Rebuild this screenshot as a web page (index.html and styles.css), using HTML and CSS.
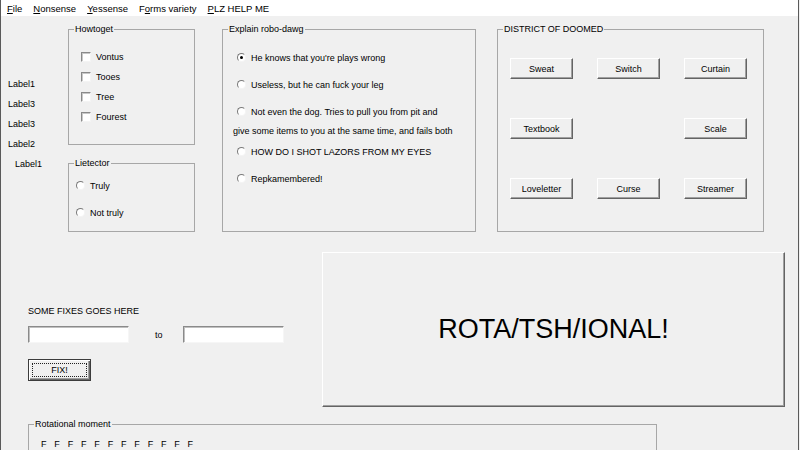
FILE: index.html
```html
<!DOCTYPE html>
<html lang="en">
<head>
	<meta charset="UTF-8">
	<title>Form1</title>

	<link rel="stylesheet" href="styles.css">
</head>
<body>
<div class="window">
	<nav class="menubar">
		<span><u>F</u>ile</span>
		<span><u>N</u>onsense</span>
		<span><u>Y</u>essense</span>
		<span>F<u>o</u>rms variety</span>
		<span><u>P</u>LZ HELP ME</span>
	</nav>

	<div class="form">
		<div class="top-row">
			<div class="labels">
				<span>Label1</span>
				<span>Label3</span>
				<span>Label3</span>
				<span>Label2</span>
				<span class="shifted">Label1</span>
			</div>

			<div class="stack">
				<div class="group howtoget">
					<span class="group-title">Howtoget</span>
					<label class="check-row"><span class="checkbox"></span>Vontus</label>
					<label class="check-row"><span class="checkbox"></span>Tooes</label>
					<label class="check-row"><span class="checkbox"></span>Tree</label>
					<label class="check-row"><span class="checkbox"></span>Fourest</label>
				</div>
				<div class="group lietector">
					<span class="group-title">Lietector</span>
					<label class="opt"><span class="radio"></span>Truly</label>
					<label class="opt"><span class="radio"></span>Not truly</label>
				</div>
			</div>

			<div class="group explain">
				<span class="group-title">Explain robo-dawg</span>
				<label class="opt"><span class="radio checked"></span>He knows that you're plays wrong</label>
				<label class="opt"><span class="radio"></span>Useless, but he can fuck your leg</label>
				<label class="opt"><span class="radio"></span>Not even the dog. Tries to pull you from pit and</label>
				<div class="opt-more">give some items to you at the same time, and fails both</div>
				<label class="opt"><span class="radio"></span>HOW DO I SHOT LAZORS FROM MY EYES</label>
				<label class="opt"><span class="radio"></span>Repkamembered!</label>
			</div>

			<div class="group district">
				<span class="group-title">DISTRICT OF DOOMED</span>
				<div class="button-grid">
					<button class="btn">Sweat</button>
					<button class="btn">Switch</button>
					<button class="btn">Curtain</button>
					<button class="btn">Textbook</button>
					<span></span>
					<button class="btn">Scale</button>
					<button class="btn">Loveletter</button>
					<button class="btn">Curse</button>
					<button class="btn">Streamer</button>
				</div>
			</div>
		</div>

		<div class="mid-row">
			<div class="fixes">
				<p>SOME FIXES GOES HERE</p>
				<div class="fix-inputs">
					<input type="text" class="textbox">
					<span class="to">to</span>
					<input type="text" class="textbox second">
				</div>
				<button class="btn default"><span class="focus">FIX!</span></button>
			</div>
			<button class="btn big">ROTA/TSH/IONAL!</button>
		</div>

		<div class="group rotational">
			<span class="group-title">Rotational moment</span>
			<div class="f-row">
				<span>F</span><span>F</span><span>F</span><span>F</span>
				<span>F</span><span>F</span><span>F</span><span>F</span>
				<span>F</span><span>F</span><span>F</span><span>F</span>
			</div>
		</div>
	</div>
</div>
</body>
</html>
```

FILE: styles.css
```css
*{
    margin: 0;
    padding: 0;
    box-sizing: border-box;
}

body{
    width: 800px;
    height: 450px;
    overflow: hidden;
    background: #f0f0f0;
    font-family: "Liberation Sans", Arial, sans-serif;
    font-size: 9px;
    color: #000;
}

.window{
    width: 799px;
    height: 450px;
    overflow: hidden;
    background: #f0f0f0;
    border-left: 1px solid #5a5a5a;
    border-right: 1px solid #5a5a5a;
}

/* menu strip */
.menubar{
    height: 16px;
    background: #fff;
    display: flex;
    align-items: center;
    gap: 11px;
    padding-left: 6px;
    font-size: 9.5px;
}

.menubar u{
    text-decoration: underline;
    text-underline-offset: 1px;
}

.form{
    padding-left: 7px;
}

/* group boxes */
.group{
    position: relative;
    border: 1px solid #a7a7a7;
}

.group-title{
    position: absolute;
    top: -7px;
    left: 5px;
    padding: 0 1px;
    line-height: 12px;
    background: #f0f0f0;
}

.top-row{
    display: flex;
    margin-top: 13px;
    height: 203px;
}

.labels{
    width: 60px;
    padding-top: 45px;
    display: flex;
    flex-direction: column;
}

.labels span{
    line-height: 20px;
}

.labels .shifted{
    padding-left: 7px;
}

.stack{
    width: 127px;
    display: flex;
    flex-direction: column;
}

.howtoget{
    height: 116px;
    padding: 17px 0 0 12px;
}

.lietector{
    height: 69px;
    margin-top: 18px;
    padding: 8px 0 0 7px;
}

.explain{
    width: 254px;
    margin-left: 27px;
    padding: 14px 0 0 14px;
}

.district{
    width: 267px;
    margin-left: 21px;
    padding: 28px 0 0 12px;
}

/* checkboxes and radios */
.check-row{
    display: flex;
    align-items: center;
    height: 20px;
    gap: 5px;
}

.checkbox{
    width: 10px;
    height: 10px;
    background: #fff;
    border: 1px solid;
    border-color: #8a8a8a #f4f4f4 #f4f4f4 #8a8a8a;
    box-shadow: inset 1px 1px #c8c8c8;
}

.opt{
    display: flex;
    align-items: center;
    height: 27px;
    gap: 5px;
}

.radio{
    width: 9px;
    height: 9px;
    border-radius: 50%;
    background: #fff;
    border: 1px solid;
    border-color: #7a7a7a #f4f4f4 #f4f4f4 #7a7a7a;
    display: flex;
    align-items: center;
    justify-content: center;
}

.radio.checked::after{
    content: "";
    width: 3px;
    height: 3px;
    border-radius: 50%;
    background: #000;
}

.opt-more{
    line-height: 13px;
    margin-left: -4px;
}

/* push buttons */
.btn{
    font-family: inherit;
    font-size: 9px;
    color: #000;
    background: #f0f0f0;
    border: 1px solid;
    border-color: #fff #646464 #646464 #fff;
    box-shadow: inset -1px -1px #a0a0a0;
}

.button-grid{
    display: grid;
    grid-template-columns: repeat(3, 63px);
    grid-auto-rows: 21px;
    column-gap: 24px;
    row-gap: 39px;
}

.mid-row{
    display: flex;
    margin-top: 20px;
}

.fixes{
    width: 254px;
    margin-left: 20px;
    padding-top: 53px;
}

.fixes p{
    line-height: 12px;
}

.fix-inputs{
    display: flex;
    align-items: center;
    margin-top: 9px;
}

.textbox{
    width: 101px;
    height: 17px;
    background: #fff;
    border: 1px solid;
    border-color: #8a8a8a #f6f6f6 #f6f6f6 #8a8a8a;
    box-shadow: inset 1px 1px #c0c0c0;
    outline: none;
}

.to{
    margin-left: 26px;
}

.textbox.second{
    margin-left: 20px;
}

.btn.default{
    margin-top: 16px;
    width: 63px;
    height: 22px;
    border: 1px solid #3c3c3c;
    box-shadow: inset 1px 1px #fff, inset -1px -1px #696969, inset -2px -2px #a0a0a0;
    padding: 3px;
    display: flex;
}

.focus{
    flex: 1;
    border: 1px dotted #222;
    line-height: 12px;
    text-align: center;
}

.btn.big{
    width: 463px;
    height: 155px;
    margin-left: 40px;
    font-size: 27px;
    box-shadow: inset -1px -1px #a0a0a0;
}

/* bottom group */
.rotational{
    width: 629px;
    height: 60px;
    margin: 17px 0 0 20px;
    padding: 13px 0 0 12px;
}

.f-row{
    display: grid;
    grid-template-columns: repeat(12, 13.33px);
    line-height: 12px;
}
```
